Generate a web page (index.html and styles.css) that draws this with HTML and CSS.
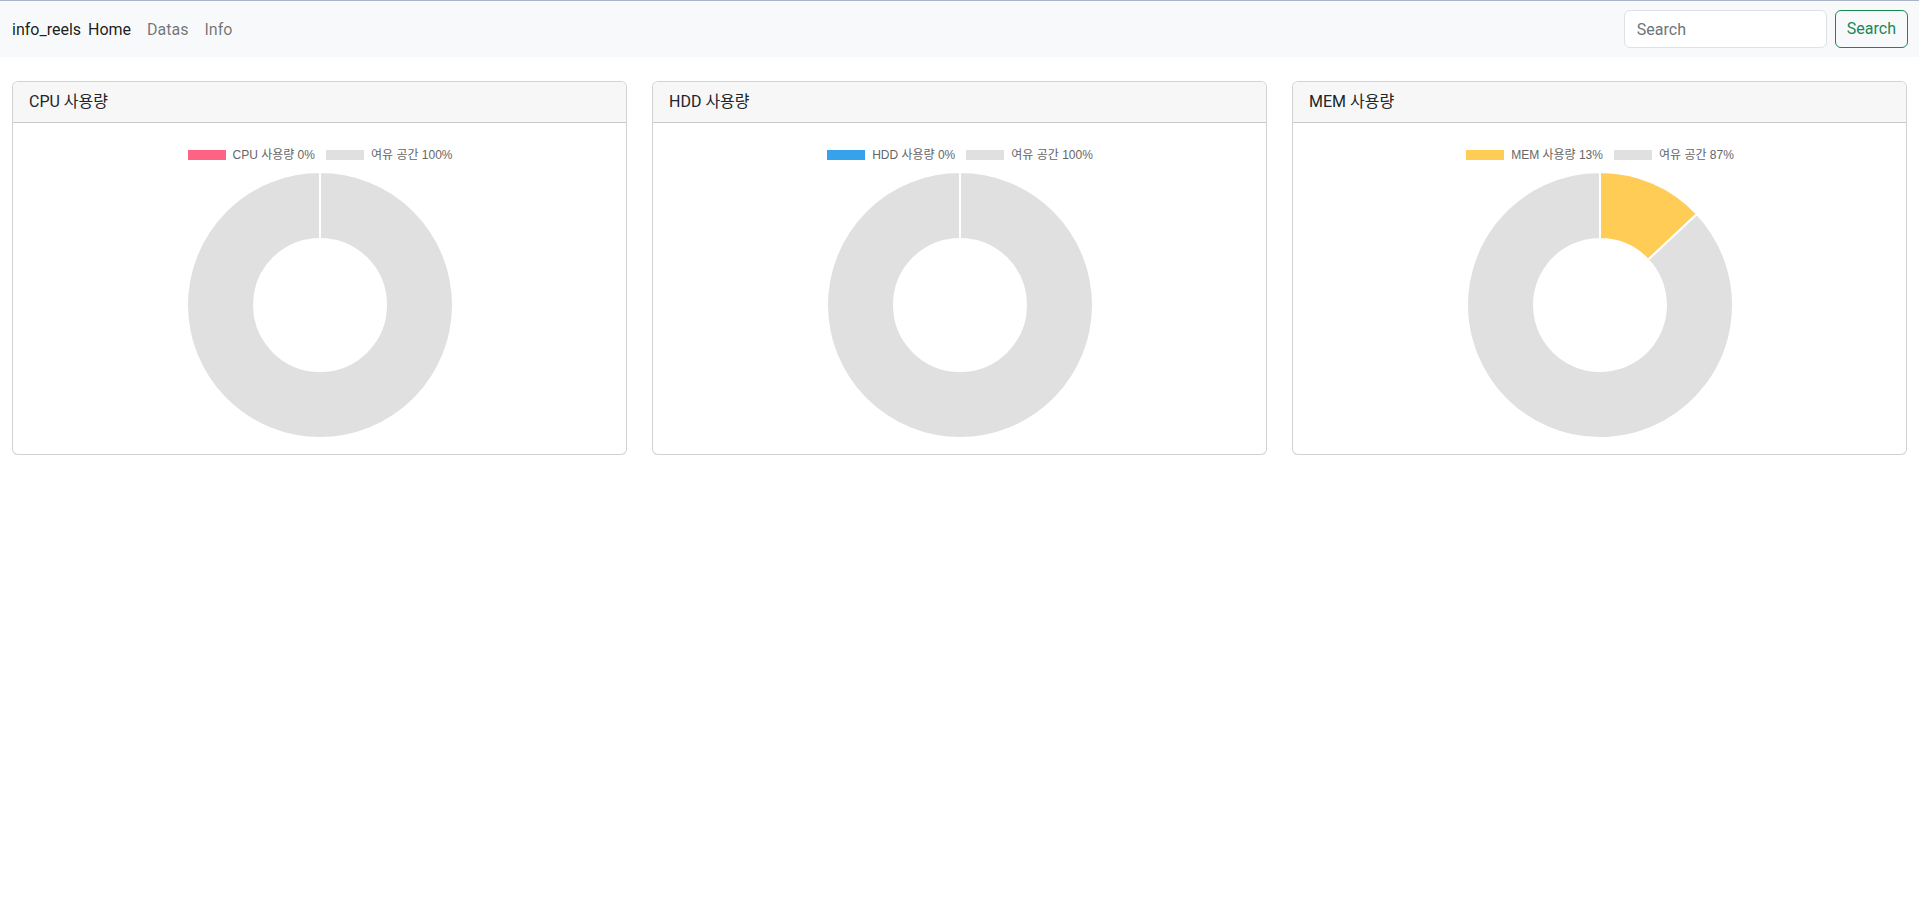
FILE: index.html
```html
<!DOCTYPE html>
<html lang="ko">
<head>
<meta charset="utf-8">
<title>info_reels</title>
<link rel="stylesheet" href="styles.css">
</head>
<body>
<nav class="navbar">
  <div class="nav-left">
    <a class="brand" href="#">info_reels</a>
    <a class="nav-link active" href="#">Home</a>
    <a class="nav-link" href="#">Datas</a>
    <a class="nav-link" href="#">Info</a>
  </div>
  <form class="search">
    <input class="search-input" type="search" placeholder="Search">
    <button class="search-btn" type="button">Search</button>
  </form>
</nav>

<main class="cards">
  <section class="card">
    <div class="card-header">CPU 사용량</div>
    <div class="card-body">
      <div class="legend">
        <span class="legend-item"><i class="swatch pink"></i>CPU 사용량 0%</span>
        <span class="legend-item"><i class="swatch gray"></i>여유 공간 100%</span>
      </div>
      <div class="chart">
        <svg width="268" height="268" viewBox="0 0 268 268">
          <path class="seg-gray" d="M134,1 A133,133 0 0 1 134,267 A133,133 0 0 1 134,1 L134,68 A66,66 0 0 0 134,200 A66,66 0 0 0 134,68 Z"/>
        </svg>
      </div>
    </div>
  </section>

  <section class="card">
    <div class="card-header">HDD 사용량</div>
    <div class="card-body">
      <div class="legend">
        <span class="legend-item"><i class="swatch blue"></i>HDD 사용량 0%</span>
        <span class="legend-item"><i class="swatch gray"></i>여유 공간 100%</span>
      </div>
      <div class="chart">
        <svg width="268" height="268" viewBox="0 0 268 268">
          <path class="seg-gray" d="M134,1 A133,133 0 0 1 134,267 A133,133 0 0 1 134,1 L134,68 A66,66 0 0 0 134,200 A66,66 0 0 0 134,68 Z"/>
        </svg>
      </div>
    </div>
  </section>

  <section class="card">
    <div class="card-header">MEM 사용량</div>
    <div class="card-body">
      <div class="legend">
        <span class="legend-item"><i class="swatch yellow"></i>MEM 사용량 13%</span>
        <span class="legend-item"><i class="swatch gray"></i>여유 공간 87%</span>
      </div>
      <div class="chart">
        <svg width="268" height="268" viewBox="0 0 268 268">
          <path class="seg-yellow" d="M134,1 A133,133 0 0 1 230.96,42.96 L182.11,88.82 A66,66 0 0 0 134,68 Z"/>
          <path class="seg-gray" d="M230.96,42.96 A133,133 0 1 1 134,1 L134,68 A66,66 0 1 0 182.11,88.82 Z"/>
        </svg>
      </div>
    </div>
  </section>
</main>
</body>
</html>
```

FILE: styles.css
```css
* { box-sizing: border-box; }

html, body {
  margin: 0;
  padding: 0;
  background: #ffffff;
}

body {
  font-family: "Segoe UI", Roboto, "Noto Sans CJK KR", sans-serif;
  font-size: 16px;
  line-height: 1.5;
  color: #212529;
}

.navbar {
  display: flex;
  align-items: center;
  justify-content: space-between;
  background: #f8f9fa;
  border-top: 1px solid #a9b4c7;
  padding: 9px 11px 9px 12px;
  height: 57px;
}

.nav-left {
  display: flex;
  align-items: center;
  padding-top: 2px;
}

.brand {
  color: rgba(0, 0, 0, 0.9);
  text-decoration: none;
  margin-right: 7px;
}

.nav-link {
  color: rgba(0, 0, 0, 0.55);
  text-decoration: none;
  margin-right: 16px;
}

.nav-link.active {
  color: rgba(0, 0, 0, 0.9);
}

.search {
  display: flex;
  gap: 8px;
  margin: 0;
}

.search-input {
  width: 203px;
  height: 38px;
  padding: 6px 12px;
  font: inherit;
  color: #212529;
  background: #fff;
  border: 1px solid #dee2e6;
  border-radius: 6px;
  outline: none;
}

.search-input::placeholder {
  color: #6c757d;
}

.search-btn {
  height: 38px;
  padding: 6px 11px;
  font: inherit;
  color: #198754;
  background: transparent;
  border: 1px solid #198754;
  border-radius: 6px;
}

.cards {
  display: grid;
  grid-template-columns: repeat(3, 1fr);
  gap: 25px;
  padding: 0 12px;
  margin-top: 24px;
}

.card {
  border: 1px solid rgba(0, 0, 0, 0.175);
  border-radius: 6px;
  background: #fff;
  overflow: hidden;
}

.card-header {
  background: #f7f7f7;
  border-bottom: 1px solid rgba(0, 0, 0, 0.175);
  padding: 8px 16px;
  line-height: 24px;
}

.card-body {
  padding: 16px 16px 15px;
}

.legend {
  display: flex;
  justify-content: center;
  align-items: center;
  gap: 10px;
  height: 32px;
  padding: 10px 0;
  font-family: "Liberation Sans", Arial, "Noto Sans CJK KR", sans-serif;
  font-size: 12px;
  line-height: 12px;
  color: #666666;
}

.legend-item {
  display: flex;
  align-items: center;
}

.swatch {
  display: inline-block;
  width: 40px;
  height: 12px;
  border: 1px solid #fff;
  margin-right: 6px;
}

.swatch.pink { background: #ff6384; }
.swatch.blue { background: #36a2eb; }
.swatch.yellow { background: #ffcd56; }
.swatch.gray { background: #e0e0e0; }

.chart {
  display: flex;
  justify-content: center;
  height: 268px;
}

.chart svg {
  display: block;
}

.seg-gray {
  fill: #e0e0e0;
  stroke: #ffffff;
  stroke-width: 2;
}

.seg-yellow {
  fill: #ffcd56;
  stroke: #ffffff;
  stroke-width: 2;
}
```
